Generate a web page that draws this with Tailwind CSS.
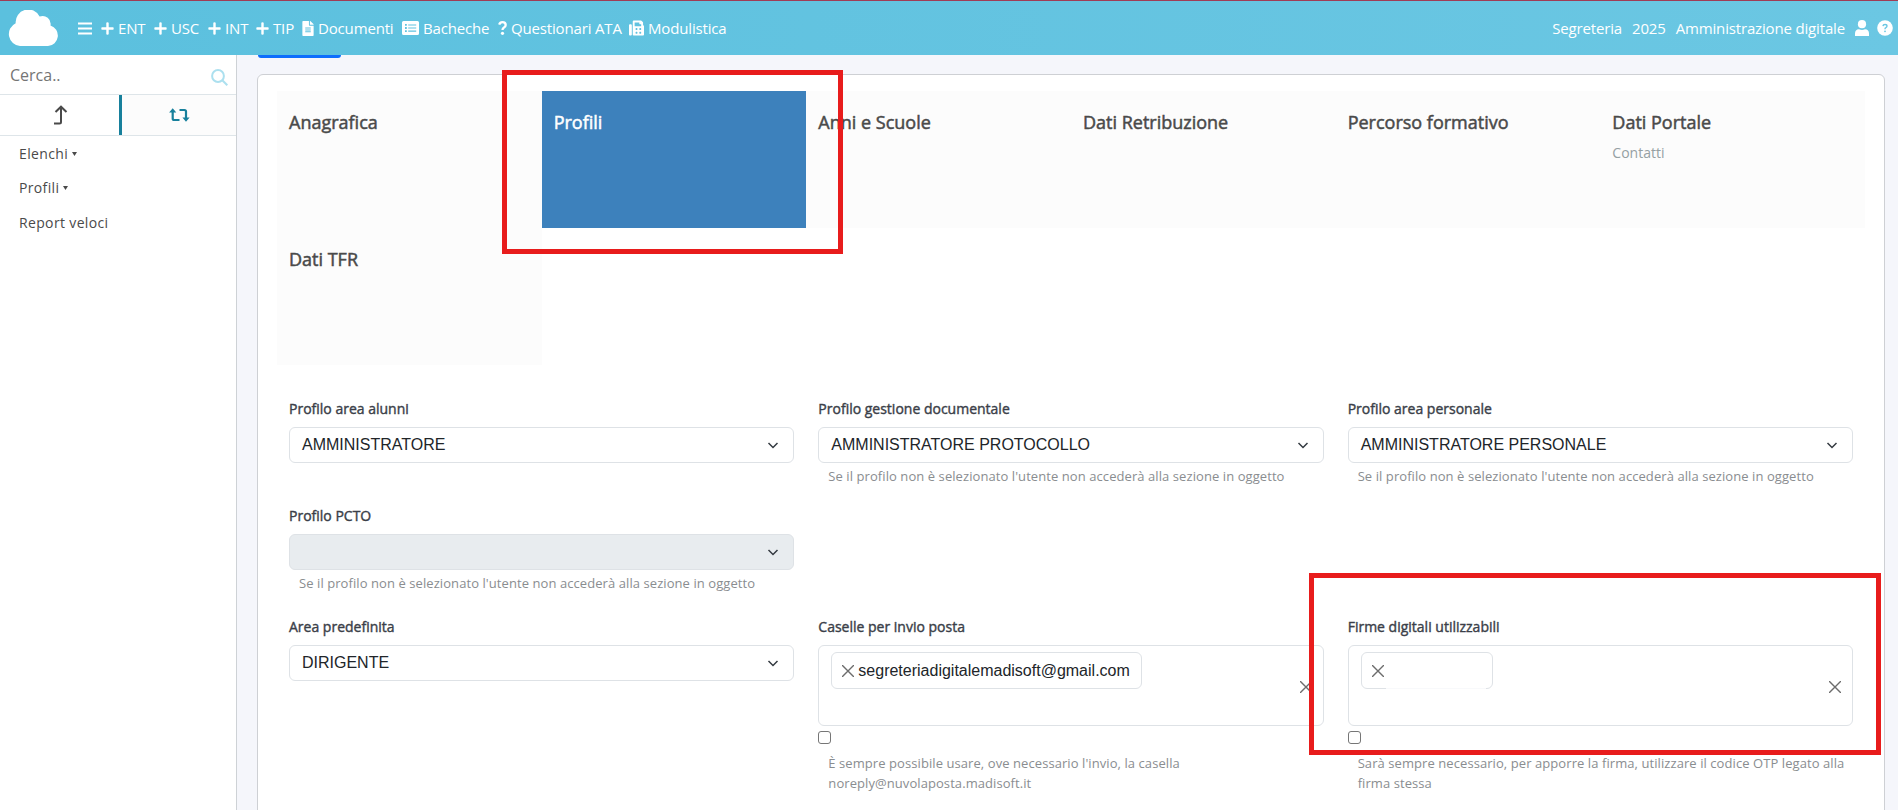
<!DOCTYPE html>
<html lang="it">
<head>
<meta charset="utf-8">
<title>Nuvola - Segreteria</title>
<script src="https://cdn.jsdelivr.net/npm/@tailwindcss/browser@4"></script>
</head>
<body class="relative flex h-[810px] w-[1898px] flex-col overflow-hidden bg-[#f5f6fb] font-['Open_Sans',sans-serif] text-[#4a4a4a]">

<header class="flex h-[55px] shrink-0 items-center border-t border-[#a03c55] bg-linear-to-r from-[#5bc0de] to-[#6bc7e3] text-[15px] tracking-[-0.16px] text-white">
  <svg class="ml-2 h-[36px] w-[51px] shrink-0" viewBox="0 0 51 36" fill="#fff"><path d="M12 36A12 12 0 0 1 7.700 13.200A12.600 12.600 0 0 1 31.600 6.600A8 8 0 0 1 42.500 15.500A10.500 10.500 0 0 1 40 36Z"/></svg>
  <nav class="ml-[19px] flex items-center">
    <svg class="h-[13px] w-[14px]" viewBox="0 0 14 13" fill="#fff"><path d="M0 .5h14v2H0zM0 5.500h14v2H0zM0 10.500h14v2H0z"/></svg>
    <a class="ml-[9px] flex w-[53px] items-center gap-1"><svg class="h-[13px] w-[13px]" viewBox="0 0 13 13" fill="#fff"><path d="M5.300 1q0-.7 1.200-.7T7.700 1v4.300H12q.7 0 .7 1.200T12 7.700H7.700V12q0 .7-1.200.7T5.300 12V7.700H1Q.3 7.700.3 6.500T1 5.300h4.300z"/></svg><span>ENT</span></a>
    <a class="flex w-[54px] items-center gap-1"><svg class="h-[13px] w-[13px]" viewBox="0 0 13 13" fill="#fff"><path d="M5.300 1q0-.7 1.200-.7T7.700 1v4.300H12q.7 0 .7 1.200T12 7.700H7.700V12q0 .7-1.200.7T5.300 12V7.700H1Q.3 7.700.3 6.500T1 5.300h4.300z"/></svg><span>USC</span></a>
    <a class="flex w-[48px] items-center gap-1"><svg class="h-[13px] w-[13px]" viewBox="0 0 13 13" fill="#fff"><path d="M5.300 1q0-.7 1.200-.7T7.700 1v4.300H12q.7 0 .7 1.200T12 7.700H7.700V12q0 .7-1.200.7T5.300 12V7.700H1Q.3 7.700.3 6.500T1 5.300h4.300z"/></svg><span>INT</span></a>
    <a class="flex w-[46px] items-center gap-1"><svg class="h-[13px] w-[13px]" viewBox="0 0 13 13" fill="#fff"><path d="M5.300 1q0-.7 1.200-.7T7.700 1v4.300H12q.7 0 .7 1.200T12 7.700H7.700V12q0 .7-1.200.7T5.300 12V7.700H1Q.3 7.700.3 6.500T1 5.300h4.300z"/></svg><span>TIP</span></a>
    <a class="flex w-[100px] items-center gap-1"><svg class="h-[15px] w-[12px]" viewBox="0 0 384 512" fill="#fff"><path d="M224 136V0H24C10.700 0 0 10.700 0 24v464c0 13.300 10.700 24 24 24h336c13.300 0 24-10.700 24-24V160H248c-13.200 0-24-10.800-24-24zm64 236c0 6.600-5.400 12-12 12H108c-6.600 0-12-5.400-12-12v-8c0-6.600 5.400-12 12-12h168c6.600 0 12 5.400 12 12v8zm0-64c0 6.600-5.400 12-12 12H108c-6.600 0-12-5.400-12-12v-8c0-6.600 5.400-12 12-12h168c6.600 0 12 5.400 12 12v8zm0-72v8c0 6.600-5.400 12-12 12H108c-6.600 0-12-5.400-12-12v-8c0-6.600 5.400-12 12-12h168c6.600 0 12 5.400 12 12zm96-114.100v6.100H256V0h6.100c6.400 0 12.500 2.500 17 7l97.900 98c4.500 4.500 7 10.600 7 16.900z"/></svg><span>Documenti</span></a>
    <a class="flex w-[96px] items-center gap-1"><svg class="h-[14px] w-[17px]" viewBox="0 0 17 14" fill="#fff" fill-rule="evenodd"><path d="M1.500 0h14Q17 0 17 1.500v11q0 1.500-1.500 1.500h-14Q0 14 0 12.500v-11Q0 0 1.500 0zM3 3v1.800h1.800V3zm3.200.4v1.100h8V3.400zM3 6.100v1.800h1.800V6.100zm3.200.4v1h8v-1zM3 9.200V11h1.800V9.200zm3.200.4v1.100h8V9.600z"/></svg><span>Bacheche</span></a>
    <a class="flex w-[131px] items-center gap-1"><svg class="h-[14px] w-[9px]" viewBox="0 0 9 14"><path d="M1.200 3.700Q2 1.200 4.400 1.200 7.700 1.200 7.700 4 7.700 5.500 6 6.400 4.500 7.200 4.500 9" fill="none" stroke="#fff" stroke-width="2.300"/><circle cx="4.500" cy="12.300" r="1.600" fill="#fff"/></svg><span>Questionari ATA</span></a>
    <a class="flex items-center gap-1"><svg class="h-[16px] w-[15px]" viewBox="0 0 512 512" fill="#fff"><path d="M480 160V77.250a32 32 0 0 0-9.380-22.630L425.370 9.370A32 32 0 0 0 402.750 0H160a32 32 0 0 0-32 32v448a32 32 0 0 0 32 32h320a32 32 0 0 0 32-32V192a32 32 0 0 0-32-32zM288 432a16 16 0 0 1-16 16h-32a16 16 0 0 1-16-16v-32a16 16 0 0 1 16-16h32a16 16 0 0 1 16 16zm0-128a16 16 0 0 1-16 16h-32a16 16 0 0 1-16-16v-32a16 16 0 0 1 16-16h32a16 16 0 0 1 16 16zm128 128a16 16 0 0 1-16 16h-32a16 16 0 0 1-16-16v-32a16 16 0 0 1 16-16h32a16 16 0 0 1 16 16zm0-128a16 16 0 0 1-16 16h-32a16 16 0 0 1-16-16v-32a16 16 0 0 1 16-16h32a16 16 0 0 1 16 16zm0-112H192V64h160v48a16 16 0 0 0 16 16h48zM64 128H32a32 32 0 0 0-32 32v320a32 32 0 0 0 32 32h32a32 32 0 0 0 32-32V160a32 32 0 0 0-32-32z"/></svg><span>Modulistica</span></a>
  </nav>
  <div class="mr-[5px] ml-auto flex items-center">
    <span>Segreteria</span><span class="ml-[10px]">2025</span><span class="ml-[10px]">Amministrazione digitale</span>
    <svg class="ml-[10px] h-[16px] w-[14px]" viewBox="0 0 14 16" fill="#fff"><circle cx="7" cy="4.200" r="4.100"/><path d="M0 16v-2.500Q0 9.500 4 9.300q3 1.400 6 0 4 .2 4 4.200V16z"/></svg>
    <svg class="ml-2 h-[16px] w-[16px]" viewBox="0 0 16 16"><circle cx="8" cy="8" r="7.800" fill="#fff"/><path d="M5.900 6.200Q6.200 4.500 8 4.500q2 0 2 1.600 0 .9-1.100 1.500Q8 8 8 9.200" fill="none" stroke="#6bc7e3" stroke-width="1.400"/><circle cx="8" cy="11.300" r=".9" fill="#6bc7e3"/></svg>
  </div>
</header>

<div class="flex min-h-0 flex-1">
  <aside class="flex w-[237px] shrink-0 flex-col border-r border-[#ced2d6] bg-white">
    <div class="flex h-[39px] items-center justify-between pr-[8px] pl-[10px] text-base text-[#757575]">
      <span>Cerca..</span>
      <svg class="mt-[5px] h-[17px] w-[17px]" viewBox="0 0 17 17" fill="none" stroke="#ace0ef" stroke-width="2"><circle cx="7" cy="7" r="5.900"/><path d="M11.300 11.300l5 5"/></svg>
    </div>
    <div class="flex h-[42px] border-y border-[#dee5e9]">
      <div class="flex w-[122px] items-center justify-center border-r-3 border-[#17809c] pl-[2px]">
        <svg class="h-[20px] w-[14px]" viewBox="0 0 14 20" fill="none" stroke="#4a4a4a" stroke-width="2"><path d="M0 18.500h5.500Q7 18.500 7 17V2M1.500 7L7 1.700 12.500 7"/></svg>
      </div>
      <div class="flex flex-1 items-center justify-center bg-[#fcfcfc]">
        <svg class="h-[14px] w-[21px]" viewBox="0 0 21 14" fill="none" stroke="#17809c" stroke-width="2.200"><path d="M3.700 3v7.500Q3.700 12 5.200 12H10.500M10.500 2h5Q17 2 17 3.500V11"/><path d="M3.700.3L7.300 4.500H.1zM17 13.700l3.600-4.200h-7.200z" fill="#17809c" stroke="none"/></svg>
      </div>
    </div>
    <ul class="flex flex-col pt-[1px] pl-[19px] text-sm tracking-[0.35px]">
      <li class="flex h-[34px] items-center gap-1">Elenchi<svg class="h-[4px] w-[5px]" viewBox="0 0 5 4" fill="#4a4a4a"><path d="M0 0h5L2.500 4z"/></svg></li>
      <li class="flex h-[34px] items-center gap-1">Profili<svg class="h-[4px] w-[5px]" viewBox="0 0 5 4" fill="#4a4a4a"><path d="M0 0h5L2.500 4z"/></svg></li>
      <li class="flex h-[35px] items-center">Report veloci</li>
    </ul>
  </aside>

  <main class="flex flex-1 flex-col pr-[13px] pl-[20px]">
    <div class="ml-px h-[3px] w-[83px] shrink-0 rounded-b-md bg-[#0d6efd]"></div>
    <section class="mt-4 flex h-[760px] shrink-0 flex-col rounded-md border border-[#ced0d4] bg-white pt-4 pr-[19px] pl-[19px]">
      <div class="grid grid-cols-6 text-lg leading-6 [-webkit-text-stroke:0.5px]">
        <div class="h-[137px] bg-[#fcfcfc] px-3 pt-[19px]">Anagrafica</div>
        <div class="h-[137px] bg-[#3d81bc] px-3 pt-[19px] text-white">Profili</div>
        <div class="h-[137px] bg-[#fcfcfc] px-3 pt-[19px]">Anni e Scuole</div>
        <div class="h-[137px] bg-[#fcfcfc] px-3 pt-[19px]">Dati Retribuzione</div>
        <div class="h-[137px] bg-[#fcfcfc] px-3 pt-[19px]">Percorso formativo</div>
        <div class="h-[137px] bg-[#fcfcfc] px-3 pt-[19px]">Dati Portale<div class="mt-[9px] text-sm leading-5 text-[#95a0a3] [-webkit-text-stroke:0]">Contatti</div></div>
        <div class="h-[137px] bg-[#fcfcfc] px-3 pt-[19px]">Dati TFR</div>
      </div>

      <div class="mt-[34px] grid grid-cols-3 grid-rows-[107px_111px_auto] text-sm leading-5 text-[#8a8d90]">
        <div class="px-3">
          <div class="mb-2 text-[#3b3f49] [-webkit-text-stroke:0.4px]">Profilo area alunni</div>
          <div class="flex h-[36px] items-center justify-between rounded-md border border-[#dee2e6] pr-[14px] pl-3 font-['Liberation_Sans',sans-serif] text-base text-[#212529]">AMMINISTRATORE<svg class="h-3 w-3" viewBox="0 0 12 12" fill="none" stroke="#343a40" stroke-width="1.500"><path d="M1.500 4L6 8.500 10.500 4"/></svg></div>
        </div>
        <div class="px-3">
          <div class="mb-2 text-[#3b3f49] [-webkit-text-stroke:0.4px]">Profilo gestione documentale</div>
          <div class="flex h-[36px] items-center justify-between rounded-md border border-[#dee2e6] pr-[14px] pl-3 font-['Liberation_Sans',sans-serif] text-base text-[#212529]">AMMINISTRATORE PROTOCOLLO<svg class="h-3 w-3" viewBox="0 0 12 12" fill="none" stroke="#343a40" stroke-width="1.500"><path d="M1.500 4L6 8.500 10.500 4"/></svg></div>
          <div class="mt-[3px] px-[10px] text-[13px] tracking-[0.075px]">Se il profilo non è selezionato l'utente non accederà alla sezione in oggetto</div>
        </div>
        <div class="px-3">
          <div class="mb-2 text-[#3b3f49] [-webkit-text-stroke:0.4px]">Profilo area personale</div>
          <div class="flex h-[36px] items-center justify-between rounded-md border border-[#dee2e6] pr-[14px] pl-3 font-['Liberation_Sans',sans-serif] text-base text-[#212529]">AMMINISTRATORE PERSONALE<svg class="h-3 w-3" viewBox="0 0 12 12" fill="none" stroke="#343a40" stroke-width="1.500"><path d="M1.500 4L6 8.500 10.500 4"/></svg></div>
          <div class="mt-[3px] px-[10px] text-[13px] tracking-[0.075px]">Se il profilo non è selezionato l'utente non accederà alla sezione in oggetto</div>
        </div>

        <div class="col-span-3 w-1/3 px-3">
          <div class="mb-2 text-[#3b3f49] [-webkit-text-stroke:0.4px]">Profilo PCTO</div>
          <div class="flex h-[36px] items-center justify-end rounded-md border border-[#dee2e6] bg-[#e8ecef] pr-[14px]"><svg class="h-3 w-3" viewBox="0 0 12 12" fill="none" stroke="#343a40" stroke-width="1.500"><path d="M1.500 4L6 8.500 10.500 4"/></svg></div>
          <div class="mt-[3px] px-[10px] text-[13px] tracking-[0.075px]">Se il profilo non è selezionato l'utente non accederà alla sezione in oggetto</div>
        </div>

        <div class="px-3">
          <div class="mb-2 text-[#3b3f49] [-webkit-text-stroke:0.4px]">Area predefinita</div>
          <div class="flex h-[36px] items-center justify-between rounded-md border border-[#dee2e6] pr-[14px] pl-3 font-['Liberation_Sans',sans-serif] text-base text-[#212529]">DIRIGENTE<svg class="h-3 w-3" viewBox="0 0 12 12" fill="none" stroke="#343a40" stroke-width="1.500"><path d="M1.500 4L6 8.500 10.500 4"/></svg></div>
        </div>
        <div class="px-3">
          <div class="mb-2 text-[#3b3f49] [-webkit-text-stroke:0.4px]">Caselle per invio posta</div>
          <div class="flex h-[81px] items-center justify-between rounded-md border border-[#dee2e6] pr-[11px] pl-3">
            <div class="mt-[6px] flex h-[37px] items-center gap-1 self-start rounded-md border border-[#dee2e6] pt-px pr-[11px] pl-[10px] font-['Liberation_Sans',sans-serif] text-base text-[#212529]"><svg class="h-3 w-3" viewBox="0 0 12 12" stroke="#6c6c6c" stroke-width="1.400"><path d="M0 0l12 12M12 0L0 12"/></svg>segreteriadigitalemadisoft@gmail.com</div>
            <svg class="mt-[2px] h-3 w-3" viewBox="0 0 12 12" stroke="#6c6c6c" stroke-width="1.400"><path d="M0 0l12 12M12 0L0 12"/></svg>
          </div>
          <div class="mt-[5px] h-[13px] w-[13px] rounded-[3px] border border-[#767676] bg-white"></div>
          <div class="mt-[9px] w-[400px] px-[10px] text-[13px] tracking-[0.075px]">È sempre possibile usare, ove necessario l'invio, la casella noreply@nuvolaposta.madisoft.it</div>
        </div>
        <div class="px-3">
          <div class="mb-2 text-[#3b3f49] [-webkit-text-stroke:0.4px]">Firme digitali utilizzabili</div>
          <div class="flex h-[81px] items-center justify-between rounded-md border border-[#dee2e6] pr-[11px] pl-3">
            <div class="relative mt-[6px] flex h-[37px] w-[132px] items-center self-start rounded-md border border-[#dee2e6] px-[10px] pt-px"><svg class="h-3 w-3" viewBox="0 0 12 12" stroke="#6c6c6c" stroke-width="1.400"><path d="M0 0l12 12M12 0L0 12"/></svg><span class="absolute right-[6px] -bottom-px left-[24px] h-px bg-[#f8f9fb]"></span></div>
            <svg class="mt-[2px] h-3 w-3" viewBox="0 0 12 12" stroke="#6c6c6c" stroke-width="1.400"><path d="M0 0l12 12M12 0L0 12"/></svg>
          </div>
          <div class="mt-[5px] h-[13px] w-[13px] rounded-[3px] border border-[#767676] bg-white"></div>
          <div class="mt-[9px] pl-[10px] text-[13px] tracking-[0.075px]">Sarà sempre necessario, per apporre la firma, utilizzare il codice OTP legato alla<br>firma stessa</div>
        </div>
      </div>
    </section>
  </main>
</div>

<div class="absolute top-[70px] left-[502px] h-[184px] w-[341px] border-5 border-[#e81c1c]"></div>
<div class="absolute top-[573px] left-[1309px] h-[182px] w-[572px] border-5 border-[#e81c1c]"></div>
</body>
</html>
